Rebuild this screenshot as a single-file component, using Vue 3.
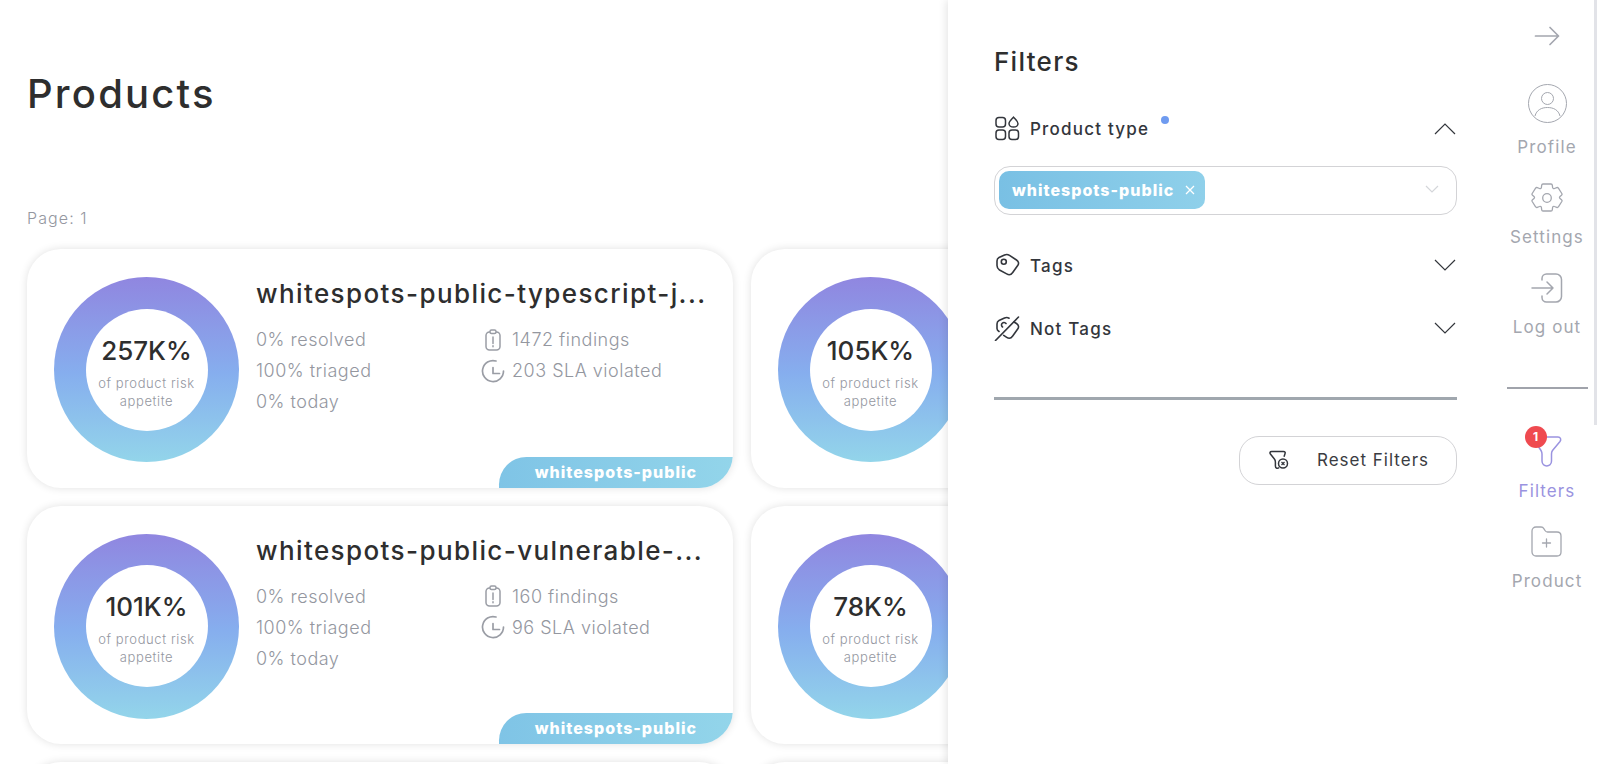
<template>
  <div class="page">
    <main class="main">
      <h1 class="title">Products</h1>
      <div class="page-no">Page: 1</div>

      <div class="grid">
        <article v-for="(p, i) in products" :key="i" class="card">
          <div v-if="p.risk" class="donut">
            <div class="donut-hole">
              <div class="risk">{{ p.risk }}</div>
              <div class="risk-note">of product risk appetite</div>
            </div>
          </div>
          <div v-if="p.name" class="info">
            <h2 class="name">{{ p.name }}</h2>
            <div class="stats">
              <div class="stat-col">
                <div>0% resolved</div>
                <div>100% triaged</div>
                <div>0% today</div>
              </div>
              <div class="stat-col">
                <div class="stat-icon-row">
                  <svg class="stat-icon" width="24" height="24" viewBox="0 0 24 24" fill="none" stroke="#9a9da5" stroke-width="1.5">
                    <rect x="5" y="4" width="14" height="18" rx="3.5" />
                    <rect x="9" y="2" width="6" height="3.5" rx="1.5" fill="#fff" />
                    <path d="M12 9v6.5M12 17.8v1" stroke-linecap="round" />
                  </svg>
                  <span>{{ p.findings }} findings</span>
                </div>
                <div class="stat-icon-row">
                  <svg class="stat-icon" width="24" height="24" viewBox="0 0 24 24" fill="none" stroke="#9a9da5" stroke-width="1.7" stroke-linecap="round" stroke-linejoin="round">
                    <path d="M22.5 12A10.5 10.5 0 1 1 15 2M12 8.5v6h6.5" />
                  </svg>
                  <span>{{ p.sla }} SLA violated</span>
                </div>
              </div>
            </div>
          </div>
          <div v-if="p.name" class="team-tag">whitespots-public</div>
        </article>
      </div>
    </main>

    <aside class="panel">
      <section class="filters">
        <h2 class="filters-title">Filters</h2>

        <div class="filter-row first">
          <svg class="filter-icon" width="26" height="26" viewBox="0 0 26 26" fill="none" stroke="#33363c" stroke-width="1.5">
            <rect x="2" y="2.500" width="9.500" height="9.500" rx="3" />
            <path d="M19.500 2.200c1.800 2 4.500 4 4.500 6.500a4.500 3.300 0 0 1-9 0c0-2.500 2.700-4.500 4.500-6.500z" />
            <rect x="2" y="15" width="9.500" height="9.500" rx="3" />
            <rect x="15" y="15" width="9.500" height="9.500" rx="3" />
          </svg>
          <span class="filter-label">Product type</span>
          <span class="dot"></span>
          <svg class="chev" width="24" height="13" viewBox="0 0 24 13" fill="none" stroke="#33363c" stroke-width="1.2">
            <path d="M2 12L12 2l10 10" />
          </svg>
        </div>

        <div class="select">
          <span class="chip">
            whitespots-public
            <svg width="10" height="10" viewBox="0 0 10 10" stroke="#fff" stroke-width="1.3"><path d="M1 1l8 8M9 1L1 9" /></svg>
          </span>
          <svg class="select-chev" width="14" height="9" viewBox="0 0 14 9" fill="none" stroke="#d4d6da" stroke-width="1.2">
            <path d="M1 1l6 6 6-6" />
          </svg>
        </div>

        <div class="filter-row">
          <svg class="filter-icon" width="26" height="26" viewBox="0 0 26 26" fill="none" stroke="#33363c" stroke-width="1.600" stroke-linejoin="round">
            <path d="M5 5.500L10.500 3c2-.9 3.500-.6 5 .4l7 4.600c2.300 1.500 2.600 3.500 1.200 5.500l-5 7c-1.500 2.200-3.800 2.800-6 1.400L5.500 18C3.500 16.700 3 15.500 3 13.500V9c0-1.500.6-2.800 2-3.500z" />
            <circle cx="9.800" cy="9.800" r="2.500" />
          </svg>
          <span class="filter-label">Tags</span>
          <svg class="chev" width="24" height="13" viewBox="0 0 24 13" fill="none" stroke="#33363c" stroke-width="1.2">
            <path d="M2 1l10 10L22 1" />
          </svg>
        </div>

        <div class="filter-row">
          <svg class="filter-icon" width="26" height="26" viewBox="0 0 26 26" fill="none" stroke="#33363c" stroke-width="1.600" stroke-linejoin="round" stroke-linecap="round">
            <path d="M5 16.500C3.500 15.500 3 15 3 13.500V9c0-1.500.6-2.800 2-3.500L10.500 3c1.800-.8 3.200-.6 4.600.2M20 7l2.500 1.500c2.300 1.500 2.600 3.500 1.200 5.500l-5 7c-1.500 2.200-3.800 2.800-6 1.400l-3-2" />
            <path d="M12 8.500A2.500 2.500 0 1 0 8.500 12M1.500 25.500L24.500 2" />
          </svg>
          <span class="filter-label">Not Tags</span>
          <svg class="chev" width="24" height="13" viewBox="0 0 24 13" fill="none" stroke="#33363c" stroke-width="1.2">
            <path d="M2 1l10 10L22 1" />
          </svg>
        </div>

        <hr class="filters-line" />

        <button class="reset">
          <svg width="20" height="20" viewBox="0 0 20 20" fill="none" stroke="#33363c" stroke-width="1.500" stroke-linejoin="round">
            <path d="M2.500 1.500h12c1.500 0 2 1 1.500 2.200l-1 3M2.500 1.500C1 1.500.6 3 1.400 4l4 5c.8 1 1 1.800 1 3v4c0 2.500 2.200 3 3.800 1.500" />
            <circle cx="14" cy="13.500" r="4.500" />
            <path d="M12.500 12l3 3M15.500 12l-3 3" stroke-width="1.200" />
          </svg>
          <span>Reset Filters</span>
        </button>
      </section>

      <nav class="side">
        <svg class="back" width="26" height="20" viewBox="0 0 26 20" fill="none" stroke="#a4a7af" stroke-width="1.700" stroke-linecap="round" stroke-linejoin="round">
          <path d="M1.500 10h23M16 1.500l8.500 8.500-8.500 8.500" />
        </svg>

        <div class="side-item">
          <svg width="39" height="39" viewBox="0 0 39 39" fill="none" stroke="#a4a7af" stroke-width="1">
            <circle cx="19.500" cy="19.500" r="19" />
            <circle cx="19.500" cy="14.500" r="6" />
            <path d="M7 32c1.500-6 6.500-8.500 12.500-8.500S30.500 26 32 32" />
          </svg>
          <span>Profile</span>
        </div>

        <div class="side-item">
          <svg width="32" height="30" viewBox="0 0 32 30" fill="none" stroke="#a4a7af" stroke-width="1.300" stroke-linejoin="round">
            <path d="M12 1h8c.8 0 1.200.5 1.300 1.200l.3 2.300c.1.900 1 1.400 1.900 1l2.200-.9c.7-.3 1.300-.1 1.700.6l3.400 5.300c.4.700.3 1.300-.3 1.800l-1.500 1.300c-.7.600-.7 1.300 0 1.800l1.500 1.300c.6.500.7 1.100.3 1.800l-3.400 5.300c-.4.700-1 .9-1.700.6l-2.200-.9c-.9-.4-1.800.1-1.900 1l-.3 2.300c-.1.700-.5 1.200-1.300 1.200h-8c-.8 0-1.200-.5-1.300-1.200l-.3-2.300c-.1-.9-1-1.400-1.900-1l-2.200.9c-.7.300-1.300.1-1.700-.6l-3.400-5.300c-.4-.7-.3-1.300.3-1.800l1.500-1.300c.7-.5.700-1.200 0-1.800l-1.500-1.300c-.6-.5-.7-1.100-.3-1.800l3.400-5.300c.4-.7 1-.9 1.700-.6l2.200.9c.9.400 1.800-.1 1.900-1l.3-2.300C10.800 1.500 11.200 1 12 1z" />
            <circle cx="16" cy="15" r="4.300" />
          </svg>
          <span>Settings</span>
        </div>

        <div class="side-item">
          <svg width="32" height="30" viewBox="0 0 32 30" fill="none" stroke="#a4a7af" stroke-width="1.500" stroke-linecap="round" stroke-linejoin="round">
            <path d="M11 7V5.500C11 3 13 1 15.500 1H25c3 0 5.500 2.500 5.500 5.500v17c0 3-2.500 5.500-5.500 5.500h-9.500C13 29 11 27 11 24.500V23" />
            <path d="M1 15h21M16 9l6 6-6 6" />
          </svg>
          <span>Log out</span>
        </div>

        <hr class="side-line" />

        <div class="side-item active">
          <div class="funnel">
            <svg width="29" height="31" viewBox="0 0 29 31" fill="none" stroke="#9a93e0" stroke-width="1.500" stroke-linejoin="round">
              <path d="M4 1h21c2.500 0 3.500 2.500 2 4.500l-7.500 9c-1 1.300-1 2-1 3.500v7c0 6.500-9.500 6.500-9.500 0v-7c0-1.500-.3-2.300-1-3.500L2 5.500C.5 3.500 1.500 1 4 1z" />
            </svg>
            <span class="badge">1</span>
          </div>
          <span>Filters</span>
        </div>

        <div class="side-item">
          <svg width="31" height="31" viewBox="0 0 31 31" fill="none" stroke="#a4a7af" stroke-width="1.300" stroke-linejoin="round">
            <path d="M1 5c0-2.300 1.700-4 4-4h5c1.500 0 2.300.6 3 1.800l1 1.700c.6 1 1.300 1.500 2.500 1.500H26c2.300 0 4 1.700 4 4v16c0 2.300-1.700 4-4 4H5c-2.300 0-4-1.700-4-4z" />
            <path d="M15.500 13v8M11.500 17h8" stroke-linecap="round" />
          </svg>
          <span>Product</span>
        </div>

        <div class="scroll-thumb"></div>
      </nav>
    </aside>
  </div>
</template>

<script setup>
// second column sits under the filter panel, only its donut shows
const products = [
  { name: 'whitespots-public-typescript-j...', risk: '257K%', findings: 1472, sla: 203 },
  { risk: '105K%' },
  { name: 'whitespots-public-vulnerable-...', risk: '101K%', findings: 160, sla: 96 },
  { risk: '78K%' },
  {},
  {}
]
</script>

<style>
html,
body {
  margin: 0;
  height: 100%;
  overflow: hidden;
  background: #fff;
}
</style>

<style scoped>
.page {
  position: relative;
  height: 764px;
  overflow: hidden;
  font-family: Inter, "Liberation Sans", sans-serif;
  color: #2e2e2e;
}

.main {
  padding-left: 27px;
}

.title {
  margin: 0;
  padding-top: 68px;
  font-size: 40px;
  line-height: 52px;
  font-weight: 500;
  letter-spacing: 2.2px;
}

.page-no {
  margin-top: 88px;
  font-size: 16px;
  line-height: 20px;
  font-weight: 300;
  letter-spacing: 1.1px;
  color: #94979f;
}

.grid {
  display: grid;
  grid-template-columns: repeat(2, 706px);
  grid-auto-rows: 238.5px;
  gap: 18px;
  margin-top: 21px;
}

.card {
  position: relative;
  display: flex;
  gap: 17px;
  padding: 28px 0 0 27px;
  border-radius: 34px;
  box-sizing: border-box;
  background: #fff;
  box-shadow: 0 0 8px rgba(0, 0, 0, 0.12);
  overflow: hidden;
}

.donut {
  flex: none;
  display: flex;
  align-items: center;
  justify-content: center;
  width: 185px;
  height: 185px;
  border-radius: 50%;
  background: linear-gradient(180deg, #9086e0 0%, #86aeee 52%, #93d5ea 100%);
}

.donut-hole {
  width: 122px;
  height: 122px;
  border-radius: 50%;
  background: #fff;
  text-align: center;
}

.risk {
  margin-top: 26px;
  font-size: 26px;
  line-height: 32px;
  font-weight: 500;
}

.risk-note {
  margin: 7px -5px 0;
  font-size: 13px;
  line-height: 18px;
  font-weight: 300;
  letter-spacing: 0.6px;
  color: #94979f;
}

.info {
  flex: 1;
  min-width: 0;
}

.name {
  margin: 0;
  font-size: 26px;
  line-height: 34px;
  font-weight: 500;
  white-space: nowrap;
  letter-spacing: 1.4px;
}

.stats {
  display: grid;
  grid-template-columns: 225px 1fr;
  margin-top: 13px;
  font-size: 18px;
  line-height: 31px;
  font-weight: 300;
  letter-spacing: 0.5px;
  color: #94979f;
}

.stat-icon-row {
  display: flex;
  align-items: center;
  gap: 7px;
}

.stat-icon {
  flex: none;
}

.team-tag {
  position: absolute;
  right: 0;
  bottom: 0;
  width: 234px;
  height: 31px;
  padding-right: 36px;
  box-sizing: border-box;
  border-radius: 30px 0 34px 0;
  background: linear-gradient(90deg, #7fc4e6, #93d5ea);
  color: #fff;
  font-size: 16px;
  font-weight: 800;
  line-height: 31px;
  letter-spacing: 1px;
  text-align: right;
}

.panel {
  position: absolute;
  top: 0;
  right: 0;
  bottom: 0;
  left: 948px;
  display: flex;
  background: #fff;
  box-shadow: -2px 0 8px rgba(0, 0, 0, 0.1);
}

.filters {
  flex: none;
  width: 552px;
  box-sizing: border-box;
  padding: 46px 43px 0 46px;
}

.filters-title {
  margin: 0;
  font-size: 26px;
  line-height: 32px;
  font-weight: 500;
  letter-spacing: 1.3px;
}

.filter-row {
  position: relative;
  display: flex;
  align-items: center;
  gap: 10px;
  height: 26px;
  margin-top: 37px;
}

.filter-label {
  padding-top: 2px;
  font-size: 17px;
  font-weight: 500;
  letter-spacing: 1.2px;
  color: #33363c;
}

.dot {
  width: 8px;
  height: 8px;
  margin: -16px 0 0 2px;
  border-radius: 50%;
  background: #6f9bf0;
}

.chev {
  margin-left: auto;
}

.select {
  display: flex;
  align-items: center;
  justify-content: space-between;
  height: 49px;
  margin-top: 25px;
  padding: 0 17px 2px 4px;
  box-sizing: border-box;
  border: 1px solid #d3d3d6;
  border-radius: 16px;
}

.chip {
  display: flex;
  align-items: center;
  gap: 11px;
  height: 38px;
  padding: 0 10px 0 13px;
  border-radius: 10px;
  background: linear-gradient(90deg, #79c0e4, #8fd0ea);
  color: #fff;
  font-size: 16px;
  font-weight: 800;
  letter-spacing: 1px;
}

.filters-line {
  height: 3px;
  margin: 56px 0 0;
  border: 0;
  background: #a0a7ae;
}

.reset {
  display: flex;
  align-items: center;
  gap: 28px;
  width: 218px;
  height: 49px;
  margin: 36px 0 0 auto;
  padding: 0 0 2px 29px;
  box-sizing: border-box;
  border: 1px solid #d3d3d6;
  border-radius: 20px;
  background: #fff;
  color: #3a3c42;
  font-family: inherit;
  font-size: 17px;
  letter-spacing: 1px;
}

.side {
  position: relative;
  flex: 1;
  display: flex;
  flex-direction: column;
  align-items: center;
  gap: 26px;
  padding: 26px 3px 0 0;
  box-sizing: border-box;
  color: #a4a7af;
}

.back {
  margin-bottom: 12px;
}

.side-item {
  display: flex;
  flex-direction: column;
  align-items: center;
  gap: 14px;
  font-size: 17px;
  line-height: 20px;
  font-weight: 400;
  letter-spacing: 1.1px;
  white-space: nowrap;
}

.side-item.active {
  margin-bottom: -1px;
  color: #9a93e0;
}

.side-line {
  align-self: flex-start;
  width: 81px;
  height: 2px;
  margin: 24px 0 21px 7px;
  border: 0;
  background: #a0a3ab;
}

.funnel {
  position: relative;
  height: 31px;
}

.badge {
  position: absolute;
  top: -10px;
  left: -8px;
  width: 22px;
  height: 22px;
  border-radius: 50%;
  background: #ef4a50;
  color: #fff;
  font-size: 12px;
  font-weight: 700;
  letter-spacing: 0;
  line-height: 22px;
  text-align: center;
}

.scroll-thumb {
  position: absolute;
  top: 0;
  right: 0;
  width: 3px;
  height: 425px;
  background: #e2e3e8;
}
</style>
